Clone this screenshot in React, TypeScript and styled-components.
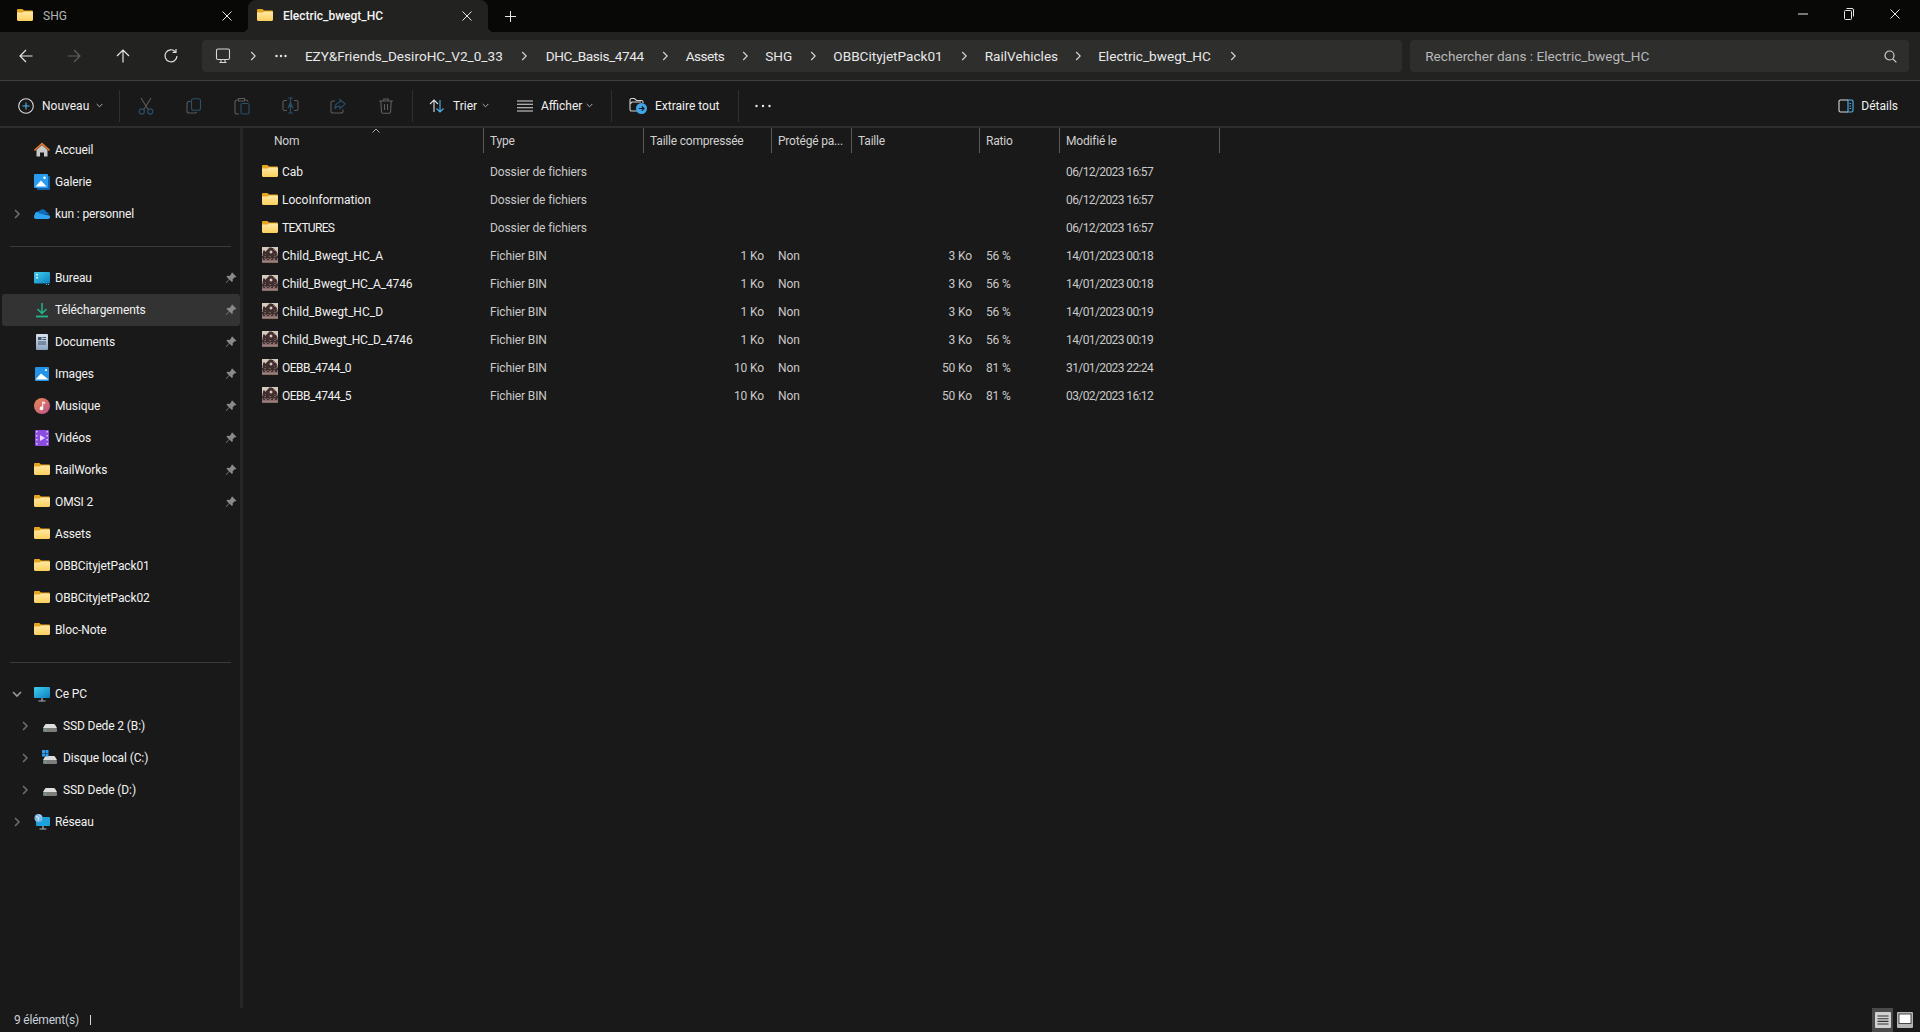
import React from "react";
import styled, { createGlobalStyle } from "styled-components";

const Global = createGlobalStyle`
  html, body { margin: 0; padding: 0; height: 100%; background: #191919; overflow: hidden; }
  body { font-family: Roboto, "Open Sans", "Liberation Sans", sans-serif; font-size: 12px; color: #f0f0f0; }
  #root { height: 100%; }
  svg { display: block; flex: none; }
`;

const Win = styled.div`
  height: 1032px; width: 1920px; display: flex; flex-direction: column; background: #191919;
`;

/* ---------- Tab bar ---------- */
const TabBar = styled.div`
  height: 32px; flex: none; display: flex; align-items: stretch; background: #080807; padding-left: 8px;
`;
const Tab = styled.div<{ $active?: boolean }>`
  position: relative;
  width: 240px; display: flex; align-items: center; padding: 0 16px 0 9px; box-sizing: border-box; gap: 10px;
  border-radius: 8px 8px 0 0;
  background: ${(p) => (p.$active ? "#222221" : "transparent")};
  color: ${(p) => (p.$active ? "#f4f4f4" : "#b5b5b5")};
  font-weight: ${(p) => (p.$active ? 500 : 400)};
  ${(p) => (p.$active ? `
    &::before, &::after { content: ""; position: absolute; bottom: 0; width: 6px; height: 6px; }
    &::before { left: -6px; background: radial-gradient(circle at 0 0, transparent 6px, #222221 6.5px); }
    &::after { right: -6px; background: radial-gradient(circle at 100% 0, transparent 6px, #222221 6.5px); }
  ` : "")}
`;
const FirstTab = styled(Tab)`
  margin-left: -8px; padding-left: 17px; width: 248px;
`;
const TabTitle = styled.span` flex: 1; font-size: 12px; `;
const NewTab = styled.div`
  width: 44px; display: flex; align-items: center; justify-content: center;
`;
const WinControls = styled.div`
  margin-left: auto; display: flex; align-items: stretch; height: 28px; padding-right: 2px;
`;
const WinBtn = styled.div`
  width: 46px; display: flex; align-items: center; justify-content: center;
`;

/* ---------- Address row ---------- */
const AddrRow = styled.div`
  flex: none; box-sizing: border-box; display: flex; align-items: center; background: #222221;
  border-bottom: 1px solid #3f3f3f; padding: 0 11px 0 2px;
  height: 49px;
`;
const NavBtn = styled.div`
  width: 48px; height: 32px; display: flex; align-items: center; justify-content: center; margin-right: 0.5px;
`;
const AddrBar = styled.div`
  width: 1201px; margin-left: 6px; height: 32px; background: #2e2e2d; border-radius: 4px; display: flex; align-items: center;
  padding-left: 13px; box-sizing: border-box; font-size: 13.6px; color: #e8e8e8;
`;
const Crumb = styled.span<{ $track: number }>` white-space: nowrap; letter-spacing: ${(p) => p.$track}px; `;
const CrumbSep = styled.span<{ $w: number }>`
  width: ${(p) => p.$w}px; display: flex; justify-content: center; flex: none;
`;
const SearchBar = styled.div`
  width: 499px; margin-left: 8px; height: 32px; background: #2e2e2d; border-radius: 4px; display: flex; align-items: center;
  justify-content: space-between; padding: 0 12px 0 15px; box-sizing: border-box; font-size: 13.6px; color: #b9b9b9;
`;

/* ---------- Toolbar ---------- */
const Toolbar = styled.div`
  height: 47px; box-sizing: border-box; flex: none; display: flex; align-items: center; background: #191919;
  border-bottom: 2px solid #2d2d2d; padding-top: 4px;
`;
const TextBtn = styled.div<{ $w: number; $pl: number }>`
  width: ${(p) => p.$w}px; padding-left: ${(p) => p.$pl}px; box-sizing: border-box; display: flex; align-items: center; flex: none;
  color: #f0f0f0; font-size: 12px;
`;
const BtnLabel = styled.span<{ $w: number }>`
  width: ${(p) => p.$w}px; margin-left: 8px; white-space: nowrap;
`;
const IconBtn = styled.div`
  width: 48px; height: 32px; display: flex; align-items: center; justify-content: center; flex: none;
`;
const ToolSep = styled.div<{ $ml?: number; $mr?: number }>`
  width: 1px; height: 32px; background: #2f2f2f; flex: none;
  margin-left: ${(p) => p.$ml ?? 0}px; margin-right: ${(p) => p.$mr ?? 0}px;
`;
const Details = styled.div`
  margin-left: auto; padding-right: 22px; display: flex; align-items: center; gap: 7px; font-size: 12px; color: #f0f0f0;
`;

/* ---------- Body ---------- */
const Body = styled.div` flex: 1; display: flex; min-height: 0; `;
const Side = styled.aside`
  width: 240px; flex: none; box-sizing: content-box; border-right: 3px solid #262626; padding-top: 6px; overflow: hidden;
`;
const SideRow = styled.div<{ $sel?: boolean; $drive?: boolean }>`
  height: 32px; margin-left: 2px; width: 238px; display: flex; align-items: center; border-radius: 3px; box-sizing: border-box;
  padding-left: ${(p) => (p.$drive ? 8 : 0)}px;
  background: ${(p) => (p.$sel ? "#333333" : "transparent")};
  color: #f2f2f2; font-size: 12px; letter-spacing: -0.12px;
`;
const ChevSlot = styled.span`
  width: 30px; margin-right: 2px; display: flex; justify-content: center; flex: none;
`;
const SideLabel = styled.span` margin-left: 5px; flex: 1; white-space: nowrap; `;
const PinSlot = styled.span` width: 16px; margin-right: 1px; display: flex; justify-content: center; `;
const SideDivider = styled.div`
  height: 1px; background: #3a3a3a; margin: 16px 9px 15px 10px;
`;

const List = styled.main` flex: 1; min-width: 0; `;
const cols = "240px 160px 128px 80px 128px 80px 160px";
const HeadRow = styled.div`
  position: relative; display: grid; grid-template-columns: ${cols}; width: 976px; height: 25px; margin-left: 1px; margin-bottom: 5px;
`;
const HeadCell = styled.div<{ $first?: boolean }>`
  display: flex; align-items: center; box-sizing: border-box; color: #d0d0d0; font-size: 12px; white-space: nowrap; letter-spacing: -0.2px;
  padding-left: ${(p) => (p.$first ? 30 : 6)}px; border-right: 1px solid #5a5a5a;
`;
const SortMark = styled.span`
  position: absolute; left: 128px; top: 0;
`;
const Row = styled.div`
  display: grid; grid-template-columns: ${cols}; width: 976px; height: 28px; align-items: center; color: #c9c9c9; font-size: 12px;
`;
const NameCell = styled.div`
  display: flex; align-items: center; gap: 4px; padding-left: 19px; color: #f0f0f0; white-space: nowrap;
`;
const Name = styled.span<{ $track: number }>` letter-spacing: ${(p) => p.$track}px; `;
const Cell = styled.div<{ $right?: boolean; $track?: number }>`
  padding: 0 7px; white-space: nowrap; text-align: ${(p) => (p.$right ? "right" : "left")};
  letter-spacing: ${(p) => p.$track ?? -0.12}px;
`;

/* ---------- Status bar ---------- */
const Status = styled.footer`
  height: 24px; flex: none; display: flex; align-items: center; padding-left: 14px; font-size: 12px; color: #c9d2da; background: #191919; letter-spacing: -0.2px;
`;
const StatusCaret = styled.span`
  width: 1px; height: 10px; background: #d8d8d8; margin-left: 11px;
`;
const ViewBtns = styled.div`
  margin-left: auto; display: flex; align-items: center; height: 100%; padding-right: 5px; gap: 1px;
`;
const ViewBtn = styled.div<{ $on?: boolean }>`
  width: 21px; height: 100%; display: flex; align-items: center; justify-content: center;
  background: ${(p) => (p.$on ? "#4a4a4a" : "transparent")};
`;

/* ---------- Icons ---------- */
const Folder = () => (
  <svg width="16" height="16" viewBox="0 1 16 16">
    <path d="M0 3.200C0 2.500.5 2 1.200 2h4.200l1.600 1.600h7.800c.7 0 1.200.5 1.200 1.200v1.200H0z" fill="#e6a51f" />
    <path d="M0 5.600l5.600 0 1.400-1.200h7.800c.7 0 1.200.5 1.200 1.200v7.200c0 .7-.5 1.200-1.200 1.200H1.200C.5 14 0 13.500 0 12.800z" fill="url(#fg)" />
    <defs>
      <linearGradient id="fg" x1="0" y1="0" x2="0" y2="1">
        <stop offset="0" stopColor="#ffe9a6" />
        <stop offset="1" stopColor="#fbcf5c" />
      </linearGradient>
    </defs>
  </svg>
);

const trainMap = [
  "lllllllbbbllllll",
  "llllllbddddbllll",
  "lllllbdddddmblll",
  "lbblbdddmmddmbll",
  "lddbdddmllmdddbl",
  "lddddddmllmddddl",
  "bdddddddmmddddmb",
  "bddmddddddddmddb",
  "bdddddddddddddmm",
  "ddmmdddmmdddmmdd",
  "dddddddddddddddd",
  "mdmmdmmdmmdmmddm",
  "rddrrddrrddrrddr",
  "rrrrrrrrrrrrrrrr",
  "bbbbbbbbbbbbbbbb",
  "rrrrrrrrrrrrrrrr",
];
const trainColors: Record<string, string> = {
  l: "#d4cabd", b: "#94827c", d: "#402e2f", m: "#705b59", r: "#8b6a6a",
};
const FileIcon = () => (
  <svg width="16" height="16" viewBox="0 1 16 16" overflow="visible" shapeRendering="crispEdges">
    {trainMap.map((line, y) =>
      line.split("").map((c, x) => <rect key={`${x}-${y}`} x={x} y={y} width="1" height="1" fill={trainColors[c]} />)
    )}
  </svg>
);

const Close = ({ c = "#e6e6e6" }: { c?: string }) => (
  <svg width="10" height="10" viewBox="0 0 10 10" stroke={c} strokeWidth="1"><path d="M.5.5l9 9M9.5.5l-9 9" /></svg>
);
const Chev = ({ c = "#d8d8d8", s = 8 }: { c?: string; s?: number }) => (
  <svg width={s} height={s * 1.25} viewBox="0 0 8 10" fill="none" stroke={c} strokeWidth="1.100"><path d="M2.200 1l4 4-4 4" /></svg>
);
const SideChev = ({ open }: { open?: boolean }) => (
  <svg width="10" height="10" viewBox="0 0 10 10" fill="none" stroke={open ? "#9a9a9a" : "#6c6c6c"} strokeWidth="1.600">
    <path d={open ? "M1 3l4 4 4-4" : "M3 1l4 4-4 4"} />
  </svg>
);
const Caret = () => (
  <svg width="7" height="5" viewBox="0 0 7 5" fill="none" stroke="#b0b0b0" strokeWidth="1"><path d="M.7 1l2.800 2.800L6.300 1" /></svg>
);
const Pin = () => (
  <svg width="12" height="12" viewBox="0 0 12 12" fill="#8a8a8a">
    <path d="M7.200.6l4.200 4.200-1 .6-.7-.2-2 2 .1 2-.9.9L4.400 7.600 1.200 11 .8 10.600 4 7.200 1.500 4.700l.9-.9 2 .1 2-2-.2-.7z" />
  </svg>
);
const Arrow = ({ dir, c }: { dir: "l" | "r" | "u"; c: string }) => (
  <svg width="16" height="16" viewBox="0 0 16 16" fill="none" stroke={c} strokeWidth="1.200"
    style={{ transform: dir === "r" ? "rotate(180deg)" : dir === "u" ? "rotate(90deg)" : undefined }}>
    <path d="M14.500 8H2M8 2L2 8l6 6" />
  </svg>
);
const Refresh = () => (
  <svg width="16" height="16" viewBox="0 0 16 16" fill="none" stroke="#e0e0e0" strokeWidth="1.200">
    <path d="M12.500 3.800A6 6 0 1 0 14 8" /><path d="M13 .9v3.400H9.600" />
  </svg>
);
const Monitor = () => (
  <svg width="16" height="16" viewBox="0 0 16 16" fill="none" stroke="#d8d8d8" strokeWidth="1.100">
    <rect x="1.500" y="1" width="13" height="10.500" rx="1.500" /><path d="M6 11.500v2.500M10 11.500v2.500M4.500 14.500h7" />
  </svg>
);
const Dots = ({ w = 12 }: { w?: number }) => (
  <svg width={w} height="4" viewBox={`0 0 ${w} 4`} fill="#e8e8e8">
    <circle cx="1.500" cy="2" r="1.200" /><circle cx={w / 2} cy="2" r="1.200" /><circle cx={w - 1.5} cy="2" r="1.200" />
  </svg>
);
const SearchIcon = () => (
  <svg width="13" height="13" viewBox="0 0 13 13" fill="none" stroke="#d0d0d0" strokeWidth="1.200">
    <circle cx="5.500" cy="5.500" r="4.500" /><path d="M8.800 8.800l3.600 3.600" />
  </svg>
);
const Plus = () => (
  <svg width="16" height="16" viewBox="0 0 16 16" fill="none" stroke="#4fb5ee" strokeWidth="1.100">
    <circle cx="8" cy="8" r="7.300" stroke="#dcdcdc" /><path d="M8 4.500v7M4.500 8h7" />
  </svg>
);
const Cut = () => (
  <svg width="16" height="18" viewBox="0 0 16 18" fill="none" strokeWidth="1.100">
    <path d="M3 1l7.500 12M13 1L5.500 13" stroke="#5a5a5a" />
    <circle cx="3.800" cy="14.500" r="2.600" stroke="#29506b" /><circle cx="12.200" cy="14.500" r="2.600" stroke="#29506b" />
  </svg>
);
const Copy = () => (
  <svg width="16" height="16" viewBox="0 0 16 16" fill="none" strokeWidth="1.100">
    <path d="M4.500 3.500H3A2 2 0 0 0 1 5.500V13a2 2 0 0 0 2 2h6a2 2 0 0 0 1.700-1" stroke="#5a5a5a" />
    <rect x="5.500" y=".8" width="9" height="11.400" rx="2" stroke="#29506b" />
  </svg>
);
const Paste = () => (
  <svg width="16" height="18" viewBox="0 0 16 18" fill="none" strokeWidth="1.100">
    <path d="M4 3H3a2 2 0 0 0-2 2v10a2 2 0 0 0 2 2h2M11 3h1a2 2 0 0 1 2 1.500M4.500 1.500h6v2.500h-6z" stroke="#5a5a5a" />
    <rect x="7" y="6.500" width="8" height="10.500" rx="1.500" stroke="#29506b" />
  </svg>
);
const Rename = () => (
  <svg width="17" height="17" viewBox="0 0 17 17" fill="none" strokeWidth="1.100">
    <path d="M5 3.500H2.500A1.500 1.500 0 0 0 1 5v7a1.500 1.500 0 0 0 1.500 1.500H5M12 3.500h2.500A1.500 1.500 0 0 1 16 5v7a1.500 1.500 0 0 1-1.500 1.500H12" stroke="#5a5a5a" />
    <path d="M6.200 1h4.600M8.500 1v15M6.200 16h4.600M6 11.200l2.500-6 2.500 6M6.900 9.400h3.200" stroke="#29506b" />
  </svg>
);
const Share = () => (
  <svg width="16" height="16" viewBox="0 0 16 16" fill="none" strokeWidth="1.100">
    <path d="M5 3H3a2 2 0 0 0-2 2v8a2 2 0 0 0 2 2h8a2 2 0 0 0 2-2v-1.500" stroke="#5a5a5a" />
    <path d="M10 1.500L15.200 6 10 10.500V8c-2.500 0-4 .7-5.200 2.800C5 6.800 7 4.500 10 4.200z" stroke="#29506b" />
  </svg>
);
const Trash = () => (
  <svg width="14" height="16" viewBox="0 0 14 16" fill="none" stroke="#5f5f5f" strokeWidth="1.100">
    <path d="M0 3h14M4.800 3V1h4.400v2M1.800 3l.7 11a1.500 1.500 0 0 0 1.500 1.200h6a1.500 1.500 0 0 0 1.500-1.200l.7-11M5.500 6v6M8.500 6v6" />
  </svg>
);
const Sort = () => (
  <svg width="16" height="16" viewBox="0 0 16 16" fill="none" strokeWidth="1.100">
    <path d="M5 14V2M1 6l4-4 4 4" stroke="#e0e0e0" /><path d="M11 2v12M7.500 10.500L11 14l3.500-3.500" stroke="#4fb5ee" />
  </svg>
);
const ListLines = () => (
  <svg width="16" height="12" viewBox="0 0 16 12" fill="none" stroke="#dedede" strokeWidth="1.100"><path d="M0 1h16M0 4.300h16M0 7.700h16M0 11h16" /></svg>
);
const Extract = () => (
  <svg width="18" height="17" viewBox="0 0 18 17">
    <path d="M8 14H2.500A1.500 1.500 0 0 1 1 12.500V3a1.500 1.500 0 0 1 1.500-1.500h3l2 2h5a1.500 1.500 0 0 1 1.500 1.500v1M1 7l2-2h9" fill="none" stroke="#cfcfcf" strokeWidth="1.100" />
    <circle cx="12.500" cy="11.500" r="5.500" fill="#41a6e8" />
    <path d="M9.800 11.500h5M12.800 9.300l2.200 2.200-2.200 2.200" fill="none" stroke="#0d1a24" strokeWidth="1.200" />
  </svg>
);
const DetailsIcon = () => (
  <svg width="16" height="14" viewBox="0 0 16 14" fill="none" strokeWidth="1.100">
    <path d="M10 1H2.500A1.500 1.500 0 0 0 1 2.500v9A1.500 1.500 0 0 0 2.500 13H10" stroke="#d8d8d8" />
    <path d="M10 1h3.500A1.500 1.500 0 0 1 15 2.500v9a1.500 1.500 0 0 1-1.500 1.500H10zM11.500 4.500H13M11.500 7H13M11.500 9.500H13" stroke="#4fb5ee" />
  </svg>
);
const Restore = () => (
  <svg width="10" height="12" viewBox="0 0 10 12" fill="none" stroke="#e6e6e6" strokeWidth="1">
    <rect x=".5" y="2.500" width="7" height="9" rx="1" /><path d="M2.500.5h5.500a1.500 1.500 0 0 1 1.500 1.500v6.500" />
  </svg>
);
const Minimize = () => (
  <svg width="10" height="2" viewBox="0 0 10 2" stroke="#e6e6e6"><path d="M0 1h10" /></svg>
);
const TabPlus = () => (
  <svg width="11" height="11" viewBox="0 0 11 11" stroke="#e6e6e6" strokeWidth="1"><path d="M5.500 0v11M0 5.500h11" /></svg>
);
const SortUp = () => (
  <svg width="8" height="5" viewBox="0 0 8 5" fill="none" stroke="#a8a8a8" strokeWidth="1"><path d="M.5 4.500L4 1l3.500 3.500" /></svg>
);

/* sidebar icons */
const Home = () => (
  <svg width="16" height="16" viewBox="0 0 16 16">
    <path d="M2.500 8l5.500-5 5.500 5v6.500H10v-4H6v4H2.500z" fill="#c9c9c9" />
    <path d="M.5 8.500L8 1.500l7.500 7" fill="none" stroke="#e8792a" strokeWidth="1.600" />
  </svg>
);
const Gallery = () => (
  <svg width="16" height="16" viewBox="0 0 16 16">
    <rect x="3" y="2" width="13" height="14" rx="1" fill="#1261a8" />
    <rect y="0" width="14" height="14" rx="1" fill="#2a9cf0" />
    <path d="M1.500 12.500L7 6.500l5.500 6z" fill="#fff" /><circle cx="10.500" cy="3.800" r="1.300" fill="#fff" />
  </svg>
);
const Cloud = () => (
  <svg width="16" height="16" viewBox="0 0 16 16">
    <path d="M2.800 8.500A3 3 0 0 1 5.500 4.800a4 4 0 0 1 7 1.500A2.500 2.500 0 0 1 15 8.500z" fill="#0f6cbd" />
    <path d="M2.500 13A2.400 2.400 0 0 1 1 8.600 2 2 0 0 1 5 7.500l2 .2 1 .3 7.500 1.500A2 2 0 0 1 14 13z" fill="#2ba3ee" />
  </svg>
);
const Desktop = () => (
  <svg width="16" height="16" viewBox="0 0 16 16">
    <rect y="2" width="16" height="11.500" rx="1" fill="url(#dk)" />
    <rect x="2" y="4" width="2" height="1.500" fill="#d8f3fb" /><rect x="2" y="7" width="2" height="1.500" fill="#d8f3fb" />
    <rect x="12" y="14" width="1" height="1" fill="#5ab7dc" /><rect x="14" y="14" width="1" height="1" fill="#5ab7dc" />
    <defs><linearGradient id="dk" x1="0" y1="0" x2="1" y2="1"><stop offset="0" stopColor="#3fd0ee" /><stop offset="1" stopColor="#0e7fc0" /></linearGradient></defs>
  </svg>
);
const Download = () => (
  <svg width="16" height="16" viewBox="0 0 16 16" fill="none" stroke="#25b48c" strokeWidth="1.500">
    <path d="M8 1v10M3.500 7L8 11.500 12.500 7" /><path d="M2 14.500h12" strokeWidth="1.800" />
  </svg>
);
const Docs = () => (
  <svg width="16" height="16" viewBox="0 0 16 16">
    <rect x="2" y="0" width="12" height="16" rx="1" fill="url(#dc)" />
    <rect x="4" y="3" width="3.500" height="3" fill="#44576b" /><path d="M8.500 3.500H12M8.500 5.500H12M4 8H12M4 10H12" stroke="#44576b" strokeWidth="1" />
    <defs><linearGradient id="dc" x1="0" y1="0" x2="0" y2="1"><stop offset="0" stopColor="#d9e3ee" /><stop offset="1" stopColor="#8ba3bd" /></linearGradient></defs>
  </svg>
);
const Pic = () => (
  <svg width="16" height="16" viewBox="0 0 16 16">
    <rect x="1" y="1" width="14" height="14" rx="1" fill="#2492e6" />
    <path d="M1.500 13.500L7 7.500l7.500 6z" fill="#fff" /><circle cx="12" cy="4" r="1.100" fill="#fff" />
  </svg>
);
const Music = () => (
  <svg width="16" height="16" viewBox="0 0 16 16">
    <defs><linearGradient id="mu" x1="0" y1="0" x2="1" y2="1"><stop offset="0" stopColor="#e88a4e" /><stop offset="1" stopColor="#c0518f" /></linearGradient></defs>
    <circle cx="8" cy="8" r="8" fill="url(#mu)" />
    <path d="M8.200 3.500l3 .8v1.500l-2-.5v5.200a1.800 1.800 0 1 1-1-1.600z" fill="#fff" />
  </svg>
);
const Video = () => (
  <svg width="16" height="16" viewBox="0 0 16 16">
    <rect x="1" y="0" width="14" height="16" rx="1" fill="#8b4de0" />
    <path d="M6 5l5 3-5 3z" fill="#e8d8ff" />
    {[1, 5, 9, 13].map((y) => <rect key={y} x="2" y={y} width="1.500" height="1.500" fill="#d9c6f7" />)}
    {[1, 5, 9, 13].map((y) => <rect key={y} x="12.500" y={y} width="1.500" height="1.500" fill="#d9c6f7" />)}
  </svg>
);
const PC = () => (
  <svg width="16" height="16" viewBox="0 0 16 16">
    <defs><linearGradient id="pc" x1="0" y1="0" x2="1" y2="1"><stop offset="0" stopColor="#3fd0ee" /><stop offset="1" stopColor="#0e7fc0" /></linearGradient></defs>
    <rect y="1" width="16" height="11" rx="1" fill="url(#pc)" />
    <path d="M8 12v2.500M4.500 15h7" stroke="#a8b4bc" strokeWidth="1.200" />
  </svg>
);
const Drive = ({ win }: { win?: boolean }) => (
  <svg width="16" height="16" viewBox="0 0 16 16">
    <path d="M2.500 7.500C3 6.500 3.500 6 4.500 6h7c1 0 1.500.5 2 1.500L15 10H1z" fill="#dedede" />
    <rect x="1" y="10" width="14" height="4" rx="1" fill="#7d7d7d" />
    <rect x="3" y="11.500" width="1.500" height="1" fill="#3fe06a" />
    {win && (
      <g fill="#2f9df0">
        <rect x="0" y="0" width="3" height="3" /><rect x="3.500" y="0" width="3" height="3" />
        <rect x="0" y="3.500" width="3" height="3" /><rect x="3.500" y="3.500" width="3" height="3" />
      </g>
    )}
  </svg>
);
const Network = () => (
  <svg width="16" height="16" viewBox="0 0 16 16">
    <rect x="2" y="3" width="14" height="9" rx="1" fill="#1ea0dc" />
    <path d="M9 12v2.500M5.500 15h7" stroke="#a8b4bc" strokeWidth="1.200" />
    <circle cx="4.500" cy="4" r="4" fill="#7fb9e8" /><path d="M2 2.500l3 1-1 3M5 .5l2 2" stroke="#dff0fb" fill="none" />
  </svg>
);
const ViewList = () => (
  <svg width="16" height="16" viewBox="0 0 16 16">
    <rect width="16" height="16" rx="1" fill="#d0d0d0" />
    <path d="M2.500 4h11M2.500 6.700h11M2.500 9.400h11M2.500 12h11" stroke="#333" strokeWidth="1.100" />
  </svg>
);
const ViewTiles = () => (
  <svg width="16" height="16" viewBox="0 0 16 16">
    <rect width="16" height="16" rx="1" fill="#b5b5b5" />
    <rect x="2" y="2" width="12" height="9.500" fill="#fff" stroke="#222" strokeWidth=".8" />
  </svg>
);

/* ---------- Data ---------- */
type SideEntry = { label: string; icon: React.ReactNode; chev?: "open" | "closed"; pin?: boolean; sel?: boolean; drive?: boolean };
const group1: SideEntry[] = [
  { label: "Accueil", icon: <Home /> },
  { label: "Galerie", icon: <Gallery /> },
  { label: "kun : personnel", icon: <Cloud />, chev: "closed" },
];
const group2: SideEntry[] = [
  { label: "Bureau", icon: <Desktop />, pin: true },
  { label: "Téléchargements", icon: <Download />, pin: true, sel: true },
  { label: "Documents", icon: <Docs />, pin: true },
  { label: "Images", icon: <Pic />, pin: true },
  { label: "Musique", icon: <Music />, pin: true },
  { label: "Vidéos", icon: <Video />, pin: true },
  { label: "RailWorks", icon: <Folder />, pin: true },
  { label: "OMSI 2", icon: <Folder />, pin: true },
  { label: "Assets", icon: <Folder /> },
  { label: "OBBCityjetPack01", icon: <Folder /> },
  { label: "OBBCityjetPack02", icon: <Folder /> },
  { label: "Bloc-Note", icon: <Folder /> },
];
const group3: SideEntry[] = [
  { label: "Ce PC", icon: <PC />, chev: "open" },
  { label: "SSD Dede 2 (B:)", icon: <Drive />, chev: "closed", drive: true },
  { label: "Disque local (C:)", icon: <Drive win />, chev: "closed", drive: true },
  { label: "SSD Dede (D:)", icon: <Drive />, chev: "closed", drive: true },
  { label: "Réseau", icon: <Network />, chev: "closed" },
];

const crumbs: [string, number, number][] = [
  ["EZY&Friends_DesiroHC_V2_0_33", 43, 0],
  ["DHC_Basis_4744", 42, -0.4],
  ["Assets", 41, -0.5],
  ["SHG", 41, 0],
  ["OBBCityjetPack01", 42, 0],
  ["RailVehicles", 40, 0],
  ["Electric_bwegt_HC", 44, 0],
];

const files: [string, boolean, string, string, string, string, string, number][] = [
  ["Cab", true, "", "", "", "", "06/12/2023 16:57", 0],
  ["LocoInformation", true, "", "", "", "", "06/12/2023 16:57", 0],
  ["TEXTURES", true, "", "", "", "", "06/12/2023 16:57", -0.7],
  ["Child_Bwegt_HC_A", false, "1 Ko", "Non", "3 Ko", "56 %", "14/01/2023 00:18", 0],
  ["Child_Bwegt_HC_A_4746", false, "1 Ko", "Non", "3 Ko", "56 %", "14/01/2023 00:18", -0.14],
  ["Child_Bwegt_HC_D", false, "1 Ko", "Non", "3 Ko", "56 %", "14/01/2023 00:19", 0],
  ["Child_Bwegt_HC_D_4746", false, "1 Ko", "Non", "3 Ko", "56 %", "14/01/2023 00:19", -0.14],
  ["OEBB_4744_0", false, "10 Ko", "Non", "50 Ko", "81 %", "31/01/2023 22:24", -0.5],
  ["OEBB_4744_5", false, "10 Ko", "Non", "50 Ko", "81 %", "03/02/2023 16:12", -0.5],
];

const heads = ["Nom", "Type", "Taille compressée", "Protégé pa...", "Taille", "Ratio", "Modifié le"];

const SideItem = ({ item }: { item: SideEntry }) => (
  <SideRow $sel={item.sel} $drive={item.drive}>
    <ChevSlot>{item.chev && <SideChev open={item.chev === "open"} />}</ChevSlot>
    {item.icon}
    <SideLabel>{item.label}</SideLabel>
    {item.pin && <PinSlot><Pin /></PinSlot>}
  </SideRow>
);

export default function App() {
  return (
    <Win>
      <Global />
      <TabBar>
        <FirstTab>
          <Folder />
          <TabTitle>SHG</TabTitle>
          <Close />
        </FirstTab>
        <Tab $active>
          <Folder />
          <TabTitle>Electric_bwegt_HC</TabTitle>
          <Close />
        </Tab>
        <NewTab><TabPlus /></NewTab>
        <WinControls>
          <WinBtn><Minimize /></WinBtn>
          <WinBtn><Restore /></WinBtn>
          <WinBtn><Close /></WinBtn>
        </WinControls>
      </TabBar>

      <AddrRow>
        <NavBtn><Arrow dir="l" c="#e6e6e6" /></NavBtn>
        <NavBtn><Arrow dir="r" c="#5f5f5f" /></NavBtn>
        <NavBtn><Arrow dir="u" c="#e6e6e6" /></NavBtn>
        <NavBtn><Refresh /></NavBtn>
        <AddrBar>
          <Monitor />
          <CrumbSep $w={44}><Chev /></CrumbSep>
          <Dots />
          <CrumbSep $w={18}> </CrumbSep>
          {crumbs.map(([t, w, track]) => (
            <React.Fragment key={t}>
              <Crumb $track={track}>{t}</Crumb>
              <CrumbSep $w={w}><Chev /></CrumbSep>
            </React.Fragment>
          ))}
        </AddrBar>
        <SearchBar>
          <span>Rechercher dans : Electric_bwegt_HC</span>
          <SearchIcon />
        </SearchBar>
      </AddrRow>

      <Toolbar>
        <TextBtn $w={119} $pl={18}>
          <Plus /><BtnLabel $w={54}>Nouveau</BtnLabel><Caret />
        </TextBtn>
        <ToolSep $mr={2} />
        <IconBtn><Cut /></IconBtn>
        <IconBtn><Copy /></IconBtn>
        <IconBtn><Paste /></IconBtn>
        <IconBtn><Rename /></IconBtn>
        <IconBtn><Share /></IconBtn>
        <IconBtn><Trash /></IconBtn>
        <ToolSep $ml={2} />
        <TextBtn $w={100} $pl={16}>
          <Sort /><BtnLabel $w={29}>Trier</BtnLabel><Caret />
        </TextBtn>
        <TextBtn $w={98} $pl={4}>
          <ListLines /><BtnLabel $w={45}>Afficher</BtnLabel><Caret />
        </TextBtn>
        <ToolSep />
        <TextBtn $w={126} $pl={17}>
          <Extract /><BtnLabel $w={70}>Extraire tout</BtnLabel>
        </TextBtn>
        <ToolSep />
        <IconBtn><Dots w={16} /></IconBtn>
        <Details>
          <DetailsIcon />
          <span>Détails</span>
        </Details>
      </Toolbar>

      <Body>
        <Side>
          {group1.map((i) => <SideItem key={i.label} item={i} />)}
          <SideDivider />
          {group2.map((i) => <SideItem key={i.label} item={i} />)}
          <SideDivider />
          {group3.map((i) => <SideItem key={i.label} item={i} />)}
        </Side>
        <List>
          <HeadRow>
            <SortMark><SortUp /></SortMark>
            {heads.map((h, i) => <HeadCell key={h} $first={i === 0}>{h}</HeadCell>)}
          </HeadRow>
          {files.map(([name, dir, comp, prot, size, ratio, date, track]) => (
            <Row key={name}>
              <NameCell>{dir ? <Folder /> : <FileIcon />}<Name $track={track}>{name}</Name></NameCell>
              <Cell>{dir ? "Dossier de fichiers" : "Fichier BIN"}</Cell>
              <Cell $right>{comp}</Cell>
              <Cell>{prot}</Cell>
              <Cell $right>{size}</Cell>
              <Cell>{ratio}</Cell>
              <Cell $track={-0.6}>{date}</Cell>
            </Row>
          ))}
        </List>
      </Body>

      <Status>
        <span>9 élément(s)</span>
        <StatusCaret />
        <ViewBtns>
          <ViewBtn $on><ViewList /></ViewBtn>
          <ViewBtn><ViewTiles /></ViewBtn>
        </ViewBtns>
      </Status>
    </Win>
  );
}
